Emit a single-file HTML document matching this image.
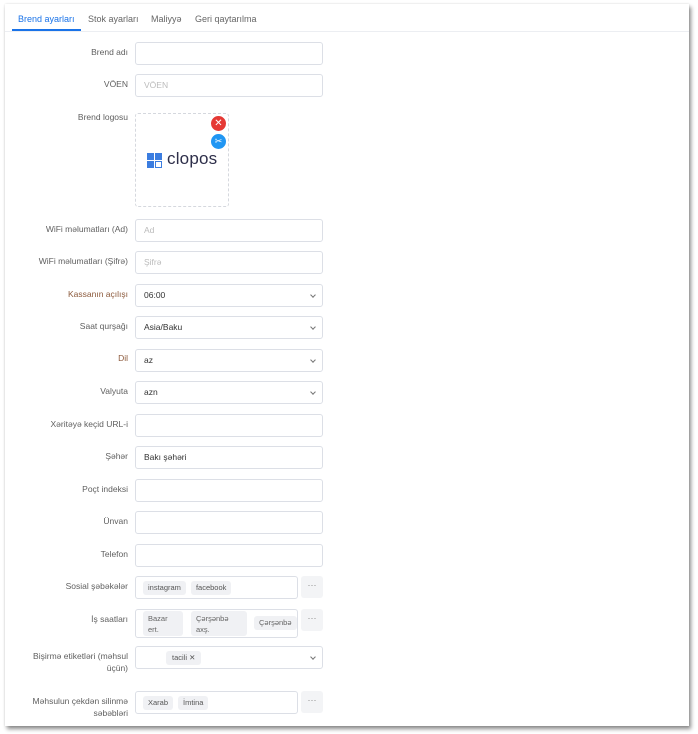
<!DOCTYPE html>
<html><head><meta charset="utf-8"><style>
*{box-sizing:border-box;margin:0;padding:0}
body{width:698px;height:734px;background:#fff;font-family:"Liberation Sans",sans-serif;position:relative;overflow:hidden}
.card{position:absolute;left:5px;top:4px;width:684px;height:722px;background:#fff;box-shadow:2px 3px 4px rgba(0,0,0,.45),0 0 2px rgba(0,0,0,.12)}
.tabs{position:absolute;left:0;top:0;width:684px;height:28px;border-bottom:1px solid #eceef2}
.tab{position:absolute;top:10px;font-size:9px;color:#666}
.ul{position:absolute;left:7px;top:25px;width:69px;height:2px;background:#1a73e8}
.lab{position:absolute;right:570px;font-size:8.5px;color:#5f5f5f;text-align:right;line-height:12px}
.or{color:#8c5a3c}
.in{position:absolute;left:135px;width:188px;height:23px;border:1px solid #dcdfe6;border-radius:3px;font-size:8.5px;color:#333;padding:0 8px;line-height:21px;background:#fff}
.ph{color:#bbb}
.chev{position:absolute;right:7px;top:8px;width:4px;height:4px;border-right:1px solid #777;border-bottom:1px solid #777;transform:rotate(45deg)}
.tag{display:inline-block;background:#f0f1f4;border-radius:3px;font-size:7.5px;color:#555;padding:0 5px;height:14px;line-height:14px;margin-right:5px;vertical-align:middle}
.dots{position:absolute;left:301px;width:22px;height:22px;background:#f3f4f6;border-radius:3px;font-size:9px;color:#888;text-align:center;line-height:18px}
</style></head><body>
<div class="card">
<div class="tabs">
<span class="tab" style="left:13px;color:#1a73e8">Brend ayarları</span>
<span class="tab" style="left:83px">Stok ayarları</span>
<span class="tab" style="left:146px">Maliyyə</span>
<span class="tab" style="left:190px">Geri qaytarılma</span>
<div class="ul"></div>
</div>
</div>
<div class="lab" style="top:46px">Brend adı</div>
<div class="in" style="top:42px"></div>
<div class="lab" style="top:78px">VÖEN</div>
<div class="in ph" style="top:74px">VÖEN</div>
<div class="lab" style="top:111px">Brend logosu</div>
<div style="position:absolute;left:135px;top:113px;width:94px;height:94px;border:1px dashed #d5d8de;border-radius:3px">
<div style="position:absolute;left:75px;top:2px;width:15px;height:15px;border-radius:50%;background:#e53935;color:#fff;font-size:10px;text-align:center;line-height:15px">✕</div>
<div style="position:absolute;left:75px;top:20px;width:15px;height:15px;border-radius:50%;background:#2196f3;color:#fff;font-size:9px;text-align:center;line-height:15px">✂</div>
<div style="position:absolute;left:11px;top:39px;width:7px;height:7px;background:#3b7de0"></div>
<div style="position:absolute;left:19px;top:39px;width:7px;height:7px;background:#3b7de0"></div>
<div style="position:absolute;left:11px;top:47px;width:7px;height:7px;background:#3b7de0"></div>
<div style="position:absolute;left:19px;top:47px;width:7px;height:7px;border:1px solid #3b7de0"></div>
<div style="position:absolute;left:31px;top:35px;font-size:17px;color:#2e2f4a;letter-spacing:.2px">clopos</div>
</div>
<div class="lab" style="top:223px">WiFi məlumatları (Ad)</div>
<div class="in ph" style="top:219px">Ad</div>
<div class="lab" style="top:255px">WiFi məlumatları (Şifrə)</div>
<div class="in ph" style="top:251px">Şifrə</div>
<div class="lab or" style="top:288px">Kassanın açılışı</div>
<div class="in" style="top:284px">06:00<span class="chev"></span></div>
<div class="lab" style="top:320px">Saat qurşağı</div>
<div class="in" style="top:316px">Asia/Baku<span class="chev"></span></div>
<div class="lab or" style="top:352px">Dil</div>
<div class="in" style="top:349px">az<span class="chev"></span></div>
<div class="lab" style="top:385px">Valyuta</div>
<div class="in" style="top:381px">azn<span class="chev"></span></div>
<div class="lab" style="top:418px">Xəritəyə keçid URL-i</div>
<div class="in" style="top:414px"></div>
<div class="lab" style="top:450px">Şəhər</div>
<div class="in" style="top:446px">Bakı şəhəri</div>
<div class="lab" style="top:483px">Poçt indeksi</div>
<div class="in" style="top:479px"></div>
<div class="lab" style="top:515px">Ünvan</div>
<div class="in" style="top:511px"></div>
<div class="lab" style="top:548px">Telefon</div>
<div class="in" style="top:544px"></div>
<div class="lab" style="top:580px">Sosial şəbəkələr</div>
<div class="in" style="top:576px;width:163px;padding-left:7px"><span class="tag">instagram</span><span class="tag">facebook</span></div>
<div class="dots" style="top:576px">···</div>
<div class="lab" style="top:613px">İş saatları</div>
<div class="in" style="top:609px;width:163px;height:29px;padding:0;overflow:hidden">
<div style="position:absolute;left:7px;top:1px;width:40px;height:25px;background:#f0f1f4;border-radius:3px;font-size:7.5px;color:#666;padding:2px 5px;line-height:11px">Bazar<br>ert.</div>
<div style="position:absolute;left:55px;top:1px;width:56px;height:25px;background:#f0f1f4;border-radius:3px;font-size:7.5px;color:#666;padding:2px 5px;line-height:11px">Çərşənbə<br>axş.</div>
<div style="position:absolute;left:118px;top:6px;height:14px;background:#f0f1f4;border-radius:3px;font-size:7.5px;color:#666;padding:0 5px;line-height:14px">Çərşənbə</div>
</div>
<div class="dots" style="top:609px">···</div>
<div class="lab" style="top:650px">Bişirmə etiketləri (məhsul<br>üçün)</div>
<div class="in" style="top:646px;height:23px;padding-left:30px"><span class="tag" style="padding:0 6px">tacili ✕</span><span class="chev"></span></div>
<div class="lab" style="top:695px">Məhsulun çekdən silinmə<br>səbəbləri</div>
<div class="in" style="top:691px;width:163px;padding-left:7px"><span class="tag">Xarab</span><span class="tag">İmtina</span></div>
<div class="dots" style="top:691px">···</div>
</body></html>
